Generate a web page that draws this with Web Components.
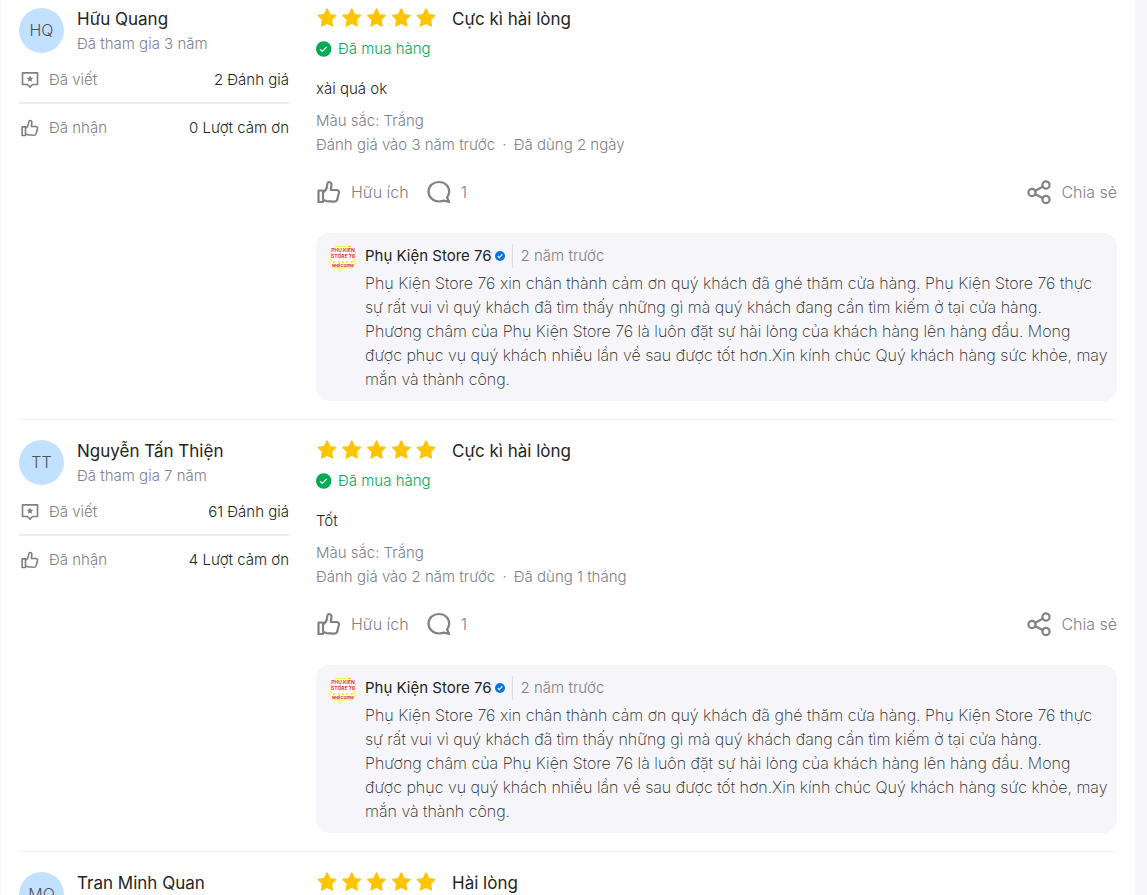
<!DOCTYPE html>
<html lang="vi">
<head>
<meta charset="utf-8">
<meta name="viewport" content="width=device-width, initial-scale=1">
<title>Đánh giá sản phẩm</title>
<style>
  body {
    margin: 0;
    background: #f5f5fa;
    color: #242424;
    font-family: Inter, "Liberation Sans", sans-serif;
    font-size: 15px;
    line-height: 24px;
  }
</style>
</head>
<body>
<review-list>
  <review-card>
    <user-summary slot="user" initials="HQ" name="Hữu Quang" joined="Đã tham gia 3 năm" written="2 Đánh giá" thanks="0 Lượt cảm ơn"></user-summary>
    <star-rating slot="rating">Cực kì hài lòng</star-rating>
    <review-body>
      xài quá ok
      <span slot="variant">Màu sắc: Trắng</span>
      <span slot="time">Đánh giá vào 3 năm trước</span>
      <span slot="used">Đã dùng 2 ngày</span>
    </review-body>
    <review-actions comments="1"></review-actions>
    <seller-reply store="Phụ Kiện Store 76" time="2 năm trước">Phụ Kiện Store 76 xin chân thành cảm ơn quý khách đã ghé thăm cửa hàng. Phụ Kiện Store 76 thực sự rất vui vì quý khách đã tìm thấy những gì mà quý khách đang cần tìm kiếm ở tại cửa hàng. <br>Phương châm của Phụ Kiện Store 76 là luôn đặt sự hài lòng của khách hàng lên hàng đầu. Mong được phục vụ quý khách nhiều lần về sau được tốt hơn.Xin kính chúc Quý khách hàng sức khỏe, may mắn và thành công.</seller-reply>
  </review-card>
  <review-card>
    <user-summary slot="user" initials="TT" name="Nguyễn Tấn Thiện" joined="Đã tham gia 7 năm" written="61 Đánh giá" thanks="4 Lượt cảm ơn"></user-summary>
    <star-rating slot="rating">Cực kì hài lòng</star-rating>
    <review-body>
      Tốt
      <span slot="variant">Màu sắc: Trắng</span>
      <span slot="time">Đánh giá vào 2 năm trước</span>
      <span slot="used">Đã dùng 1 tháng</span>
    </review-body>
    <review-actions comments="1"></review-actions>
    <seller-reply store="Phụ Kiện Store 76" time="2 năm trước">Phụ Kiện Store 76 xin chân thành cảm ơn quý khách đã ghé thăm cửa hàng. Phụ Kiện Store 76 thực sự rất vui vì quý khách đã tìm thấy những gì mà quý khách đang cần tìm kiếm ở tại cửa hàng. <br>Phương châm của Phụ Kiện Store 76 là luôn đặt sự hài lòng của khách hàng lên hàng đầu. Mong được phục vụ quý khách nhiều lần về sau được tốt hơn.Xin kính chúc Quý khách hàng sức khỏe, may mắn và thành công.</seller-reply>
  </review-card>
  <review-card>
    <user-summary slot="user" initials="MQ" name="Tran Minh Quan"></user-summary>
    <star-rating slot="rating">Hài lòng</star-rating>
  </review-card>
</review-list>

<script>
const ICONS = {
  thumb: `<path d="M1.500 10.500H6v11.500H1.500zM6 12.500c2.200-1.500 3.700-3.600 4-6.200.2-2 .2-4.300 2-4.300 2.100 0 2.700 1.800 2.400 4l-.6 4h5.700c2 0 2.800 1.300 2.400 3l-1.600 6.200c-.4 1.600-1.400 2.400-3 2.400l-5.800-.2c-2.300-.1-3.500-1.200-5.500-1.400"/>`,
  written: `<path d="M2 2.500h20v15.500h-6.500L12 21.500 8.500 18H2z"/><path d="M12 6l1.300 2.800 3 .4-2.200 2.100.5 3-2.600-1.400-2.600 1.400.5-3-2.200-2.100 3-.4z" fill="currentColor" stroke="none"/>`,
  comment: `<path d="M20 17.500c1.500-1.800 2.200-3.800 2.200-6C22.200 6 17.800 2 12 2S1.500 6 1.500 11.500 6 21.500 12 21.500c1.900 0 3.600-.3 5-.9l5.200 1.400z"/>`,
  share: `<circle cx="5" cy="12.500" r="3.600"/><circle cx="19" cy="5" r="3.600"/><circle cx="19" cy="19.500" r="3.600"/><path d="M8.200 10.800l7.600-4.200M8.200 14.200l7.600 3.700"/>`,
};

/**
 * ReviewIcon
 * @param {thumb | written | comment | share} name
 */
class ReviewIcon extends HTMLElement {
  static {
    customElements.define("review-icon", this);
  }
  connectedCallback() {
    if (this.shadowRoot) return;
    this.attachShadow({ mode: "open" }).innerHTML = /* html */ `
      <style>
        :host {
          display: block;
          flex: none;
          width: 24px;
          height: 24px;
          color: #808089;
        }
        svg {
          display: block;
          width: 100%;
          height: 100%;
        }
      </style>
      <svg viewBox="0 0 24 24" fill="none" stroke="currentColor" stroke-width="2.200" stroke-linejoin="round" stroke-linecap="round" aria-hidden="true">${ICONS[this.getAttribute("name")]}</svg>
    `;
  }
}

class ReviewList extends HTMLElement {
  static {
    customElements.define("review-list", this);
  }
  constructor() {
    super();
    this.attachShadow({ mode: "open" }).innerHTML = /* html */ `
      <style>
        :host {
          display: block;
          box-sizing: border-box;
          height: 100vh;
          overflow: hidden;
          margin: 0 12px 0 1px;
          padding: 0 18px;
          background: #fff;
        }
        ::slotted(review-card:first-child) {
          padding-top: 8px;
        }
        ::slotted(review-card:last-child) {
          border-bottom: 0;
        }
      </style>
      <slot></slot>
    `;
  }
}

class ReviewCard extends HTMLElement {
  static {
    customElements.define("review-card", this);
  }
  constructor() {
    super();
    this.attachShadow({ mode: "open" }).innerHTML = /* html */ `
      <style>
        :host {
          display: grid;
          grid-template-columns: 270px minmax(0, 1fr);
          column-gap: 27px;
          padding: 20px 0 18px;
          border-bottom: 1px solid #f2f2f2;
        }
      </style>
      <slot name="user"></slot>
      <article>
        <slot name="rating"></slot>
        <slot></slot>
      </article>
    `;
  }
}

class UserSummary extends HTMLElement {
  static {
    customElements.define("user-summary", this);
  }
  connectedCallback() {
    if (this.shadowRoot) return;
    const attr = (key) => this.getAttribute(key) ?? "";
    const stat = (icon, label, value) =>
      value
        ? `<li><review-icon name="${icon}"></review-icon><span>${label}</span><b>${value}</b></li>`
        : "";
    this.attachShadow({ mode: "open" }).innerHTML = /* html */ `
      <style>
        :host {
          display: block;
        }
        header {
          display: flex;
          gap: 13px;
        }
        .avatar {
          flex: none;
          width: 45px;
          height: 45px;
          border-radius: 50%;
          background: #c2e1ff;
          color: #515158;
          font-size: 16px;
          font-weight: 300;
          line-height: 45px;
          text-align: center;
        }
        .name {
          font-size: 17px;
          line-height: 22px;
        }
        .joined {
          margin-top: 2px;
          color: #808089;
          font-weight: 300;
        }
        ul {
          margin: 12px 0 0;
          padding: 0;
          list-style: none;
        }
        li {
          display: flex;
          align-items: center;
          gap: 10px;
          padding-left: 2px;
        }
        li + li {
          margin-top: 10px;
          padding-top: 12px;
          border-top: 2px solid #ebebf0;
        }
        li review-icon {
          width: 18px;
          height: 18px;
        }
        li span {
          color: #808089;
          font-weight: 300;
        }
        li b {
          margin-left: auto;
          font-weight: 300;
        }
      </style>
      <header>
        <div class="avatar">${attr("initials")}</div>
        <div>
          <div class="name">${attr("name")}</div>
          <div class="joined">${attr("joined")}</div>
        </div>
      </header>
      <ul>
        ${stat("written", "Đã viết", attr("written"))}
        ${stat("thumb", "Đã nhận", attr("thanks"))}
      </ul>
    `;
  }
}

class StarRating extends HTMLElement {
  static {
    customElements.define("star-rating", this);
  }
  constructor() {
    super();
    const star = (i) =>
      `<path transform="translate(${i * 24.75} 0)" d="M11 1l2.700 5.600 6 .9-4.300 4.300 1 6.100L11 15.100l-5.400 2.800 1-6.100L2.300 7.500l6-.9z"/>`;
    this.attachShadow({ mode: "open" }).innerHTML = /* html */ `
      <style>
        :host {
          display: flex;
          align-items: center;
          gap: 15px;
          font-size: 17px;
          line-height: 22px;
        }
        svg {
          display: block;
          width: 121px;
          height: 22px;
          fill: #ffc400;
          stroke: #ffc400;
          stroke-width: 1.400;
          stroke-linejoin: round;
        }
      </style>
      <svg viewBox="0 0 121 22" role="img" aria-label="5 sao">${[0, 1, 2, 3, 4].map(star).join("")}</svg>
      <span><slot></slot></span>
    `;
  }
}

class ReviewBody extends HTMLElement {
  static {
    customElements.define("review-body", this);
  }
  constructor() {
    super();
    this.attachShadow({ mode: "open" }).innerHTML = /* html */ `
      <style>
        :host {
          display: block;
        }
        .bought {
          display: flex;
          align-items: center;
          gap: 6px;
          margin-top: 8px;
          color: #00ab56;
          line-height: 22px;
          font-weight: 300;
        }
        .bought svg {
          width: 16px;
          height: 16px;
        }
        .text {
          margin-top: 17px;
          font-weight: 300;
        }
        .meta {
          margin-top: 8px;
          color: #808089;
          font-weight: 300;
        }
        .meta i {
          margin: 0 3px;
          font-style: normal;
        }
      </style>
      <div class="bought">
        <svg viewBox="0 0 16 16" aria-hidden="true">
          <circle cx="7.700" cy="8" r="7.700" fill="#00ab56"/>
          <path d="M4 8.300l2.300 2.200 4.500-4.700" fill="none" stroke="#fff" stroke-width="1.200"/>
        </svg>
        <span>Đã mua hàng</span>
      </div>
      <div class="text"><slot></slot></div>
      <div class="meta">
        <div><slot name="variant"></slot></div>
        <div><slot name="time"></slot> <i>·</i> <slot name="used"></slot></div>
      </div>
    `;
  }
}

class ReviewActions extends HTMLElement {
  static {
    customElements.define("review-actions", this);
  }
  connectedCallback() {
    if (this.shadowRoot) return;
    this.attachShadow({ mode: "open" }).innerHTML = /* html */ `
      <style>
        :host {
          display: flex;
          gap: 18px;
          margin-top: 23px;
          padding-left: 1px;
        }
        button {
          display: flex;
          align-items: center;
          gap: 10px;
          padding: 0;
          border: 0;
          background: none;
          color: #808089;
          font: inherit;
          font-size: 16px;
          font-weight: 300;
          line-height: 24px;
          cursor: pointer;
        }
        .share {
          margin-left: auto;
        }
      </style>
      <button type="button"><review-icon name="thumb"></review-icon>Hữu ích</button>
      <button type="button" aria-label="Bình luận"><review-icon name="comment"></review-icon>${this.getAttribute("comments")}</button>
      <button type="button" class="share"><review-icon name="share"></review-icon>Chia sẻ</button>
    `;
  }
}

class SellerReply extends HTMLElement {
  static {
    customElements.define("seller-reply", this);
  }
  connectedCallback() {
    if (this.shadowRoot) return;
    this.attachShadow({ mode: "open" }).innerHTML = /* html */ `
      <style>
        :host {
          display: flex;
          gap: 9px;
          margin-top: 29px;
          padding: 11px 7px 10px 14px;
          border-radius: 14px;
          background: #f5f5fa;
        }
        .logo {
          flex: none;
          width: 26px;
          height: 26px;
          margin-top: 1px;
        }
        header {
          display: flex;
          align-items: center;
        }
        .badge {
          width: 10px;
          height: 10px;
          margin: 0 7px 0 3px;
        }
        time {
          padding-left: 8px;
          border-left: 1px solid #dddde3;
          color: #808089;
          font-weight: 300;
        }
        p {
          margin: 3px 0 0;
          font-size: 16px;
          font-weight: 200;
        }
      </style>
      <svg class="logo" viewBox="0 0 26 26" aria-hidden="true">
        <circle cx="13" cy="13" r="13" fill="#fff"/>
        <path d="M5 1.500h16M1 18V8M25 18V8M2 22.500h8l-1 3 5-3h9" fill="none" stroke="#fff04a" stroke-width="1.400"/>
        <path d="M3 17h20" stroke="#ffe81f" stroke-width="2" stroke-dasharray="2 2.500"/>
        <g fill="#e5343d" font-family="Inter, sans-serif" font-weight="700" font-size="5" text-anchor="middle">
          <text x="13" y="7">PHỤ KIỆN</text>
          <text x="13" y="13">STORE 76</text>
          <text x="13" y="22">welcome</text>
        </g>
      </svg>
      <div>
        <header>
          <span>${this.getAttribute("store")}</span>
          <svg class="badge" viewBox="0 0 10 10" aria-hidden="true">
            <circle cx="5" cy="5" r="5" fill="#0d74e4"/>
            <path d="M2.800 5.200l1.500 1.500 3-3.300" fill="none" stroke="#fff" stroke-width="1.200"/>
          </svg>
          <time>${this.getAttribute("time")}</time>
        </header>
        <p><slot></slot></p>
      </div>
    `;
  }
}
</script>
</body>
</html>
